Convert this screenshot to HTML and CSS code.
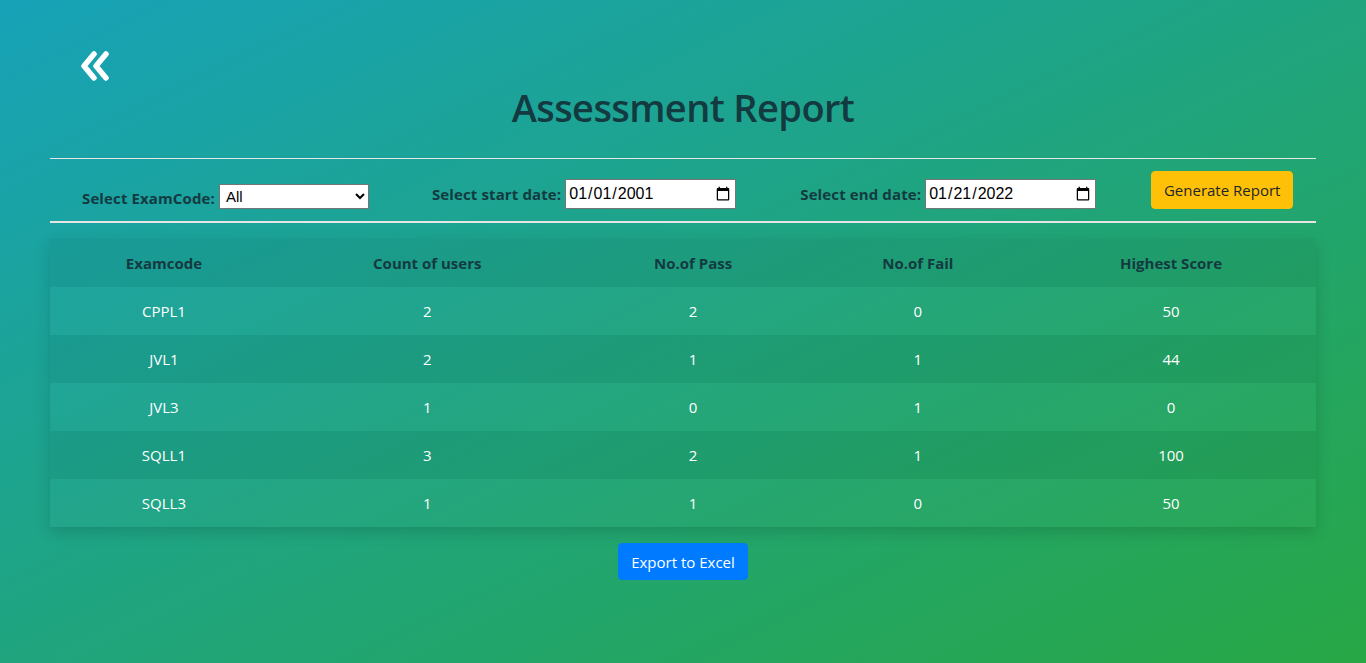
FILE: index.html
```html
<!DOCTYPE html>
<html lang="en">
<head>
<meta charset="utf-8">
<title>Assessment Report</title>
<link rel="stylesheet" href="styles.css">
</head>
<body>
<div class="page">
  <div class="top">
    <a class="back" href="#" aria-label="Back">
      <svg width="32" height="30" viewBox="0 0 32 30">
        <path d="M15 3 L5 15 L15 27" fill="none" stroke="#fff" stroke-width="5.5" stroke-linecap="round" stroke-linejoin="round"/>
        <path d="M27 3 L17 15 L27 27" fill="none" stroke="#fff" stroke-width="5.5" stroke-linecap="round" stroke-linejoin="round"/>
      </svg>
    </a>
  </div>
  <h1 class="title">Assessment Report</h1>
  <hr class="rule thin">
  <div class="filters">
    <div class="field f1">
      <label for="exam">Select ExamCode:</label>
      <select id="exam" class="select"><option>All</option></select>
    </div>
    <div class="field f2">
      <label for="start">Select start date:</label>
      <input id="start" class="date" type="date" value="2001-01-01">
    </div>
    <div class="field f3">
      <label for="end">Select end date:</label>
      <input id="end" class="date" type="date" value="2022-01-21">
    </div>
    <button class="btn-gen">Generate Report</button>
  </div>
  <hr class="rule thick">
  <table class="report">
    <colgroup>
      <col class="c1"><col class="c2"><col class="c3"><col class="c4"><col class="c5">
    </colgroup>
    <thead>
      <tr><th>Examcode</th><th>Count of users</th><th>No.of Pass</th><th>No.of Fail</th><th>Highest Score</th></tr>
    </thead>
    <tbody>
      <tr><td>CPPL1</td><td>2</td><td>2</td><td>0</td><td>50</td></tr>
      <tr><td>JVL1</td><td>2</td><td>1</td><td>1</td><td>44</td></tr>
      <tr><td>JVL3</td><td>1</td><td>0</td><td>1</td><td>0</td></tr>
      <tr><td>SQLL1</td><td>3</td><td>2</td><td>1</td><td>100</td></tr>
      <tr><td>SQLL3</td><td>1</td><td>1</td><td>0</td><td>50</td></tr>
    </tbody>
  </table>
  <div class="export-wrap">
    <button class="btn-export">Export to Excel</button>
  </div>
</div>
</body>
</html>
```

FILE: styles.css
```css
html, body {
  margin: 0;
  padding: 0;
  height: 100%;
}
body {
  background: linear-gradient(to bottom right, #17a2b8, #28a745);
  font-family: "Open Sans", "Noto Sans", sans-serif;
  color: #fff;
  min-height: 663px;
}
.page {
  padding: 0 50px;
}
.top {
  padding-top: 51px;
  padding-left: 29px;
  height: 31px;
}
.back {
  display: inline-block;
  width: 32px;
  height: 30px;
}
.back svg { display: block; }
.title {
  margin: 0;
  margin-top: 2px;
  text-align: center;
  font-size: 38px;
  font-weight: 600;
  color: #133a40;
  line-height: 46px;
  letter-spacing: -0.6px;
}
.rule {
  border: 0;
  margin: 0;
  background: #e6e6e6;
}
.rule.thin { height: 1px; margin-top: 28px; }
.rule.thick { height: 2px; }
.filters {
  display: flex;
  align-items: flex-start;
  height: 62px;
  padding-left: 32px;
}
.field {
  display: flex;
  align-items: center;
}
.field label {
  font-weight: 700;
  font-size: 15px;
  color: #133a40;
  margin-right: 4px;
  letter-spacing: 0.12px;
}
.f1 { margin-top: 25px; }
.f1 label { margin-top: 2px; }
.f2 { margin-left: 63px; margin-top: 20px; }
.f3 { margin-left: 64px; margin-top: 20px; }
.select {
  width: 150px;
  height: 25px;
  font-family: "Liberation Sans", Arial, sans-serif;
  font-size: 15px;
  border: 1px solid #767676;
  border-radius: 0;
  background: #fff;
  color: #000;
  padding: 0 2px;
}
.date {
  width: 171px;
  height: 30px;
  box-sizing: border-box;
  font-family: "Liberation Sans", Arial, sans-serif;
  font-size: 16px;
  border: 1px solid #767676;
  border-radius: 0;
  background: #fff;
  color: #000;
  padding: 0 2px;
}
.btn-gen {
  margin-left: 55px;
  margin-top: 12px;
  width: 142px;
  height: 38px;
  background: #ffc107;
  border: 1px solid #ffc107;
  border-radius: 4px;
  font-family: "Open Sans", sans-serif;
  font-size: 15px;
  color: #212529;
  padding: 0;
}
.report {
  width: 100%;
  margin-top: 16px;
  border-collapse: collapse;
  box-shadow: 0 5px 15px rgba(0, 0, 0, 0.15);
  font-size: 15px;
}
.c1 { width: 18%; }
.c2 { width: 23.6%; }
.c3 { width: 18.4%; }
.c4 { width: 17.1%; }
.c5 { width: 22.9%; }
.report th, .report td {
  height: 48px;
  padding: 0;
  text-align: center;
  vertical-align: middle;
}
.report th {
  font-weight: 700;
  color: #133a40;
  background: rgba(0, 0, 0, 0.05);
}
.report tbody tr:nth-child(odd) td { background: rgba(255, 255, 255, 0.02); }
.report tbody tr:nth-child(even) td { background: rgba(0, 0, 0, 0.05); }
.export-wrap {
  display: flex;
  justify-content: center;
  margin-top: 16px;
}
.btn-export {
  width: 130px;
  height: 37px;
  background: #007bff;
  border: 1px solid #007bff;
  border-radius: 4px;
  color: #fff;
  font-family: "Open Sans", sans-serif;
  font-size: 15px;
  padding: 0;
}
```
